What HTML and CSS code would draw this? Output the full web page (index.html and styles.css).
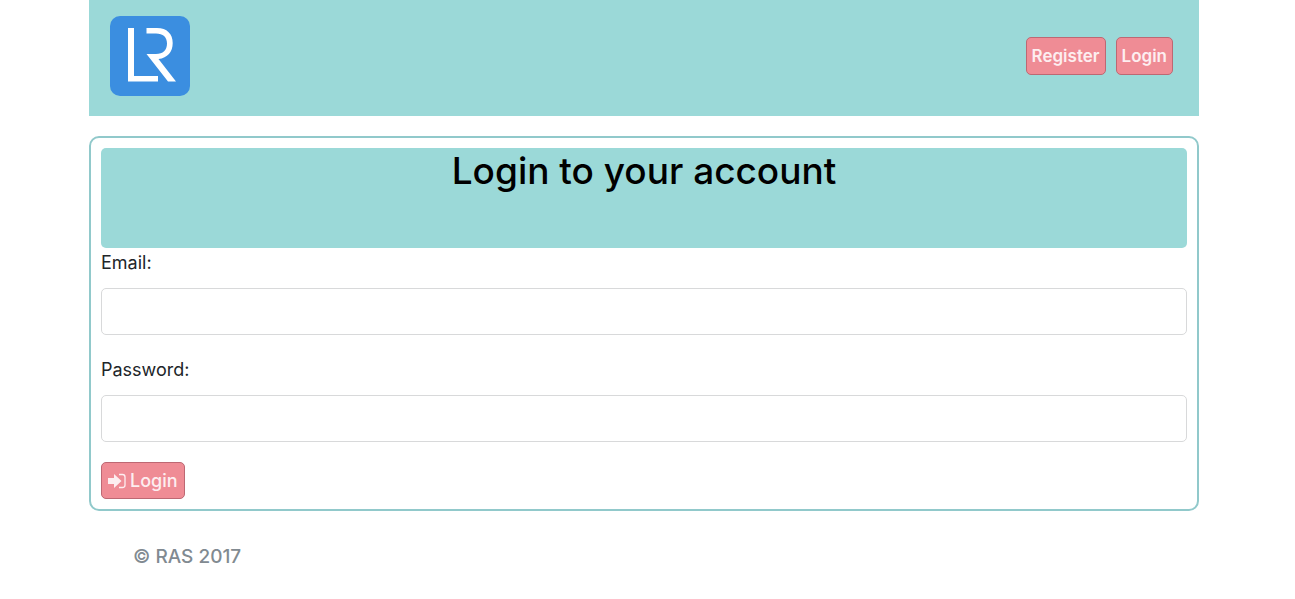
FILE: index.html
```html
<!DOCTYPE html>
<html lang="en">
<head>
<meta charset="utf-8">
<meta name="viewport" content="width=device-width, initial-scale=1">
<title>Login</title>
<link rel="stylesheet" href="styles.css">
</head>
<body>
<div class="container">
  <header class="site-header">
    <a class="logo" href="#" aria-label="Home">
      <svg viewBox="0 0 80 80" width="80" height="80" aria-hidden="true">
        <rect width="80" height="80" rx="10" fill="#3b8ee0"/>
        <path d="M18 12h6v48h24v5.500H18z" fill="#fff"/>
        <path d="M36.500 12H47C57 12 62.700 18 62.700 27C62.700 36 57.500 42 48.500 43L66 65.500H58L36.500 38H46C53 38 57 34 57 27.500C57 21 53 17.500 46 17.500H36.500z" fill="#fff"/>
      </svg>
    </a>
    <nav class="nav">
      <button class="btn btn-nav" type="button">Register</button>
      <button class="btn btn-nav" type="button">Login</button>
    </nav>
  </header>
  <main class="panel">
    <h1 class="title">Login to your account</h1>
    <form class="form">
      <div class="field">
        <label for="email">Email:</label>
        <input id="email" type="email">
      </div>
      <div class="field">
        <label for="password">Password:</label>
        <input id="password" type="password">
      </div>
      <button class="btn btn-submit" type="submit">
        <svg class="icon" viewBox="0 0 18 16" width="18" height="16" aria-hidden="true">
          <path d="M0 5h6V1L13.500 8L6 15V11H0z" fill="currentColor"/>
          <path d="M11 1.500h3.500q2.500 0 2.500 2.500v8q0 2.500-2.500 2.500H11" fill="none" stroke="currentColor" stroke-width="1.300"/>
        </svg>
        Login
      </button>
    </form>
  </main>
  <footer class="footer">© RAS 2017</footer>
</div>
</body>
</html>
```
FILE: styles.css
```css
*, *::before, *::after {
  box-sizing: border-box;
}

body {
  margin: 0;
  padding-right: 7px;
  background: #fff;
  color: #212529;
  font-family: Inter, "Liberation Sans", sans-serif;
  font-size: 18px;
  line-height: 30px;
}

.container {
  max-width: 1110px;
  margin: 0 auto;
}

.site-header {
  display: flex;
  align-items: center;
  justify-content: space-between;
  padding: 16px 26px 20px 21px;
  background: #9bd9d8;
}

.logo svg {
  display: block;
}

.nav {
  display: flex;
  gap: 10px;
}

.btn {
  display: flex;
  align-items: center;
  padding: 0 5px;
  border: 1px solid #bd6873;
  border-radius: 5px;
  background: #ef8c95;
  color: #fdeef0;
  font-family: inherit;
  font-weight: 600;
  cursor: pointer;
}

.btn-nav {
  height: 38px;
  font-size: 17px;
}

.btn-submit {
  gap: 4px;
  height: 37px;
  padding: 0 6px;
  font-size: 18px;
  font-weight: 500;
}

.panel {
  margin-top: 20px;
  padding: 10px;
  border: 2px solid #91c9cb;
  border-radius: 10px;
}

.title {
  min-height: 100px;
  margin: 0;
  border-radius: 5px;
  background: #9bd9d8;
  color: #000;
  font-size: 37px;
  font-weight: 500;
  line-height: 46px;
  text-align: center;
}

.field {
  display: flex;
  flex-direction: column;
  gap: 10px;
  margin-bottom: 20px;
}

.field input {
  width: 100%;
  height: 47px;
  padding: 8px 12px;
  border: 1px solid #d8d9da;
  border-radius: 5px;
  background: #fff;
  font: inherit;
}

.footer {
  padding: 31px 44px;
  color: #818a91;
  font-size: 19px;
  font-weight: 500;
}
```
